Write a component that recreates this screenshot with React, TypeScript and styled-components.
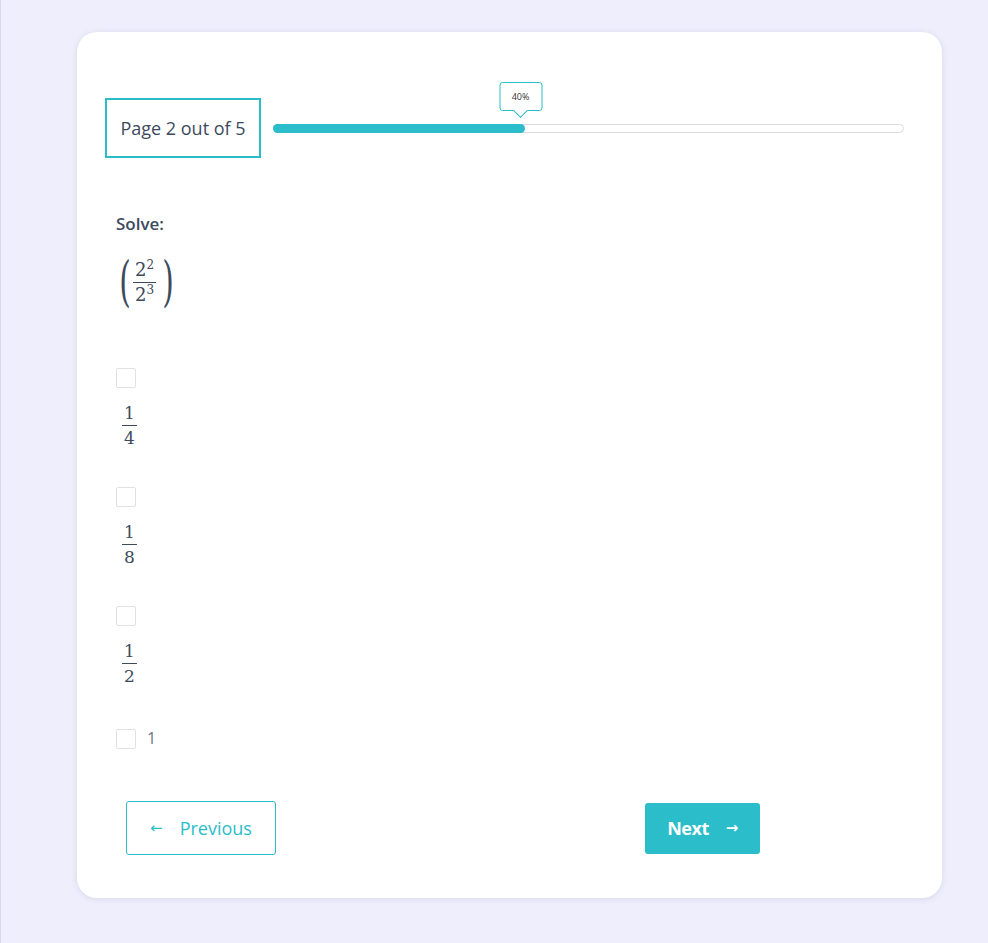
import * as React from "react";
import styled, { createGlobalStyle } from "styled-components";

const teal = "#2bbdc9";
const ink = "#3d4a5c";

const GlobalStyle = createGlobalStyle`
  html, body {
    margin: 0;
    padding: 0;
    background: #eeeefc;
    font-family: "Open Sans", "Noto Sans", sans-serif;
  }
`;

type Option = { num?: string; den?: string; text?: string };

const options: Option[] = [
  { num: "1", den: "4" },
  { num: "1", den: "8" },
  { num: "1", den: "2" },
  { text: "1" },
];

export default function App() {
  return (
    <Page>
      <GlobalStyle />
      <Card>
        <Header>
          <PageBox>Page 2 out of 5</PageBox>
          <Track>
            <Fill style={{ width: "40%" }} />
            <Bubble style={{ left: "40%" }}>40%</Bubble>
          </Track>
        </Header>

        <Question>
          <Label>Solve:</Label>
          <MathRow>
            <Paren>(</Paren>
            <Frac>
              <Num>
                2<Sup>2</Sup>
              </Num>
              <Den>
                2<Sup>3</Sup>
              </Den>
            </Frac>
            <Paren>)</Paren>
          </MathRow>
        </Question>

        <Options>
          {options.map((o, i) =>
            o.text ? (
              <InlineOption key={i}>
                <Box />
                <PlainText>{o.text}</PlainText>
              </InlineOption>
            ) : (
              <StackOption key={i}>
                <Box />
                <SmallFrac>
                  <Num>{o.num}</Num>
                  <Den>{o.den}</Den>
                </SmallFrac>
              </StackOption>
            )
          )}
        </Options>

        <Buttons>
          <PrevButton>
            <Arrow>←</Arrow>
            Previous
          </PrevButton>
          <NextButton>
            Next
            <Arrow>→</Arrow>
          </NextButton>
        </Buttons>
      </Card>
    </Page>
  );
}

const Page = styled.div`
  min-height: 943px;
  border-left: 1px solid #d6d6ec;
  box-sizing: border-box;
  padding: 32px 0 45px 76px;
`;

const Card = styled.div`
  width: 865px;
  height: 866px;
  box-sizing: border-box;
  background: #fff;
  border-radius: 20px;
  box-shadow: 0 1px 6px rgba(60, 60, 110, 0.12);
  padding: 66px 38px 0 28px;
`;

const Header = styled.div`
  display: flex;
  align-items: center;
  gap: 12px;
`;

const PageBox = styled.div`
  width: 156px;
  height: 60px;
  box-sizing: border-box;
  border: 2px solid ${teal};
  display: flex;
  align-items: center;
  justify-content: center;
  font-size: 18px;
  color: ${ink};
`;

const Track = styled.div`
  position: relative;
  flex: 1;
  height: 9px;
  box-sizing: border-box;
  border: 1px solid #d9dbe0;
  border-radius: 5px;
`;

const Fill = styled.div`
  position: absolute;
  left: -1px;
  top: -1px;
  bottom: -1px;
  background: ${teal};
  border-radius: 5px;
`;

const Bubble = styled.div`
  position: absolute;
  bottom: 21px;
  transform: translateX(calc(-50% - 5px));
  width: 43px;
  height: 29px;
  box-sizing: border-box;
  border: 1.5px solid ${teal};
  border-radius: 3px;
  background: #fff;
  display: flex;
  align-items: center;
  justify-content: center;
  font-size: 9px;
  color: #333;

  &::after {
    content: "";
    position: absolute;
    left: 50%;
    bottom: -6px;
    width: 9px;
    height: 9px;
    background: #fff;
    border-right: 1.5px solid ${teal};
    border-bottom: 1.5px solid ${teal};
    transform: translateX(-50%) rotate(45deg);
  }
`;

const Question = styled.div`
  padding: 56px 0 0 11px;
`;

const Label = styled.div`
  font-size: 17px;
  font-weight: 600;
  color: ${ink};
  line-height: 20px;
`;

const MathRow = styled.div`
  margin-top: 18px;
  display: flex;
  align-items: center;
  font-family: "DejaVu Serif", "Liberation Serif", serif;
  color: ${ink};
`;

const Paren = styled.span`
  font-size: 54px;
  font-weight: 200;
  line-height: 60px;
  transform: scaleX(0.55);
  display: inline-block;
  width: 14px;
  text-align: center;
`;

const Frac = styled.div`
  display: flex;
  flex-direction: column;
  align-items: center;
  padding: 0 3px;
  font-size: 18px;
`;

const SmallFrac = styled(Frac)`
  margin-top: 15px;
  padding-left: 6px;
  font-size: 17px;
`;

const Num = styled.span`
  line-height: 20px;
  padding: 0 2px 2px;
  border-bottom: 1px solid ${ink};
`;

const Den = styled.span`
  line-height: 20px;
  padding-top: 2px;
`;

const Sup = styled.sup`
  font-size: 12px;
  vertical-align: 7px;
  line-height: 0;
`;

const Options = styled.div`
  padding: 56px 0 0 11px;
  display: flex;
  flex-direction: column;
  gap: 39px;
`;

const StackOption = styled.div`
  display: flex;
  flex-direction: column;
  align-items: flex-start;
  font-family: "DejaVu Serif", "Liberation Serif", serif;
  color: ${ink};
`;

const InlineOption = styled.div`
  display: flex;
  align-items: center;
  gap: 11px;
  margin-top: 4px;
`;

const Box = styled.span`
  width: 20px;
  height: 20px;
  box-sizing: border-box;
  border: 1px solid #dfe1e4;
  border-radius: 2px;
  background: #fff;
`;

const PlainText = styled.span`
  font-size: 16px;
  color: #6b7684;
  margin-top: -3px;
`;

const Buttons = styled.div`
  display: flex;
  align-items: center;
  justify-content: space-between;
  margin-top: 52px;
  padding: 0 144px 0 21px;
`;

const Arrow = styled.span`
  font-size: 15px;
  font-weight: 700;
  font-family: "DejaVu Sans", sans-serif;
`;

const PrevButton = styled.button`
  width: 150px;
  height: 54px;
  box-sizing: border-box;
  border: 1px solid ${teal};
  border-radius: 3px;
  background: #fff;
  color: ${teal};
  font-family: "Open Sans", sans-serif;
  font-size: 18px;
  display: flex;
  align-items: center;
  justify-content: center;
  gap: 17px;
  padding: 0;

  ${Arrow} {
    font-weight: 400;
  }
`;

const NextButton = styled.button`
  width: 115px;
  height: 51px;
  border: none;
  border-radius: 3px;
  background: ${teal};
  color: #fff;
  font-family: "Open Sans", sans-serif;
  font-size: 18px;
  font-weight: 700;
  display: flex;
  align-items: center;
  justify-content: center;
  gap: 17px;
  padding: 0;
  letter-spacing: -0.5px;
`;
